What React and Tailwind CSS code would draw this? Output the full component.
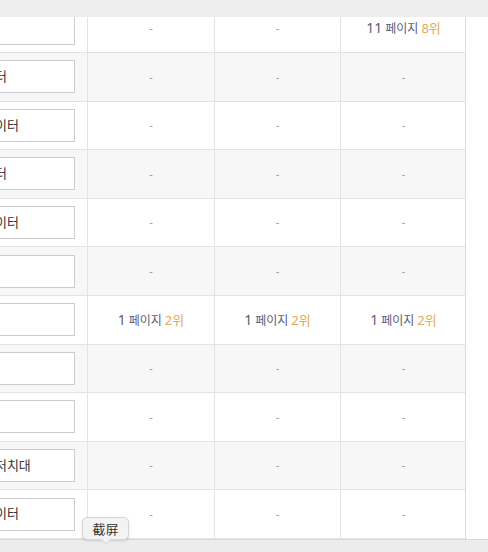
const rows = [
  { name: '', cells: ['-', '-', { page: 11, rank: 8 }] },
  { name: '모니터', cells: ['-', '-', '-'] },
  { name: '빅데이터', cells: ['-', '-', '-'] },
  { name: '모니터', cells: ['-', '-', '-'] },
  { name: '빅데이터', cells: ['-', '-', '-'] },
  { name: '의자', cells: ['-', '-', '-'] },
  { name: '', cells: [{ page: 1, rank: 2 }, { page: 1, rank: 2 }, { page: 1, rank: 2 }] },
  { name: '의자', cells: ['-', '-', '-'] },
  { name: '', cells: ['-', '-', '-'] },
  { name: '진료처치대', cells: ['-', '-', '-'] },
  { name: '빅데이터', cells: ['-', '-', '-'] },
];

const Rank = ({ value }) => {
  if (value === '-') {
    return <span className="text-[11px] text-[#999]">-</span>;
  }
  return (
    <span className="flex items-baseline gap-[3px]">
      <span className="text-[14px] text-[#5c5c78]">{value.page}</span>
      <span className="text-[12px] text-[#5c5c78]">페이지</span>
      <span className="text-[13px] text-[#e2aa55]">{value.rank}위</span>
    </span>
  );
};

export default function App() {
  return (
    <div
      className="relative w-[488px] h-[552px] flex flex-col bg-white overflow-hidden"
      style={{ fontFamily: '"Noto Sans", "Noto Sans CJK KR", sans-serif' }}
    >
      <div className="h-[17px] shrink-0 bg-[#ededed]" />

      <div className="flex-1 overflow-hidden">
        <div className="w-[466px] -mt-[12.6px] border-r border-[#dcdcdc]">
          {rows.map((row, i) => (
            <div
              key={i}
              className={`grid grid-cols-[88px_127px_126px_125px] h-[48.6px] border-b border-[#e3e3e3] ${
                i % 2 === 1 ? 'bg-[#f7f7f7]' : 'bg-white'
              }`}
            >
              <div className="flex items-center border-r border-[#e3e3e3]">
                <div className="ml-[-61px] w-[136px] h-[33px] shrink-0 flex items-center pl-[31px] bg-white border border-[#cccccc] text-[13px] text-[#333] whitespace-nowrap overflow-hidden">
                  {row.name}
                </div>
              </div>
              {row.cells.map((cell, j) => (
                <div
                  key={j}
                  className={`flex items-center justify-center ${j < 2 ? 'border-r border-[#e3e3e3]' : ''}`}
                >
                  <Rank value={cell} />
                </div>
              ))}
            </div>
          ))}
        </div>
      </div>

      <div className="h-[13px] shrink-0 bg-[#ececec] border-t border-[#d9d9d9]" />

      {/* screenshot tooltip */}
      <div className="absolute left-[82px] top-[517px] flex flex-col items-center">
        <div
          className="w-[47px] h-[23px] flex items-center justify-center rounded-[5px] bg-[#f3f3f3] border border-[#d6d6d6] shadow text-[13px] text-[#333]"
          style={{ fontFamily: '"Noto Sans CJK SC", sans-serif' }}
        >
          截屏
        </div>
        <div className="w-[8px] h-[8px] -mt-[5px] rotate-45 bg-[#f3f3f3] border-r border-b border-[#d6d6d6]" />
      </div>
    </div>
  );
}
